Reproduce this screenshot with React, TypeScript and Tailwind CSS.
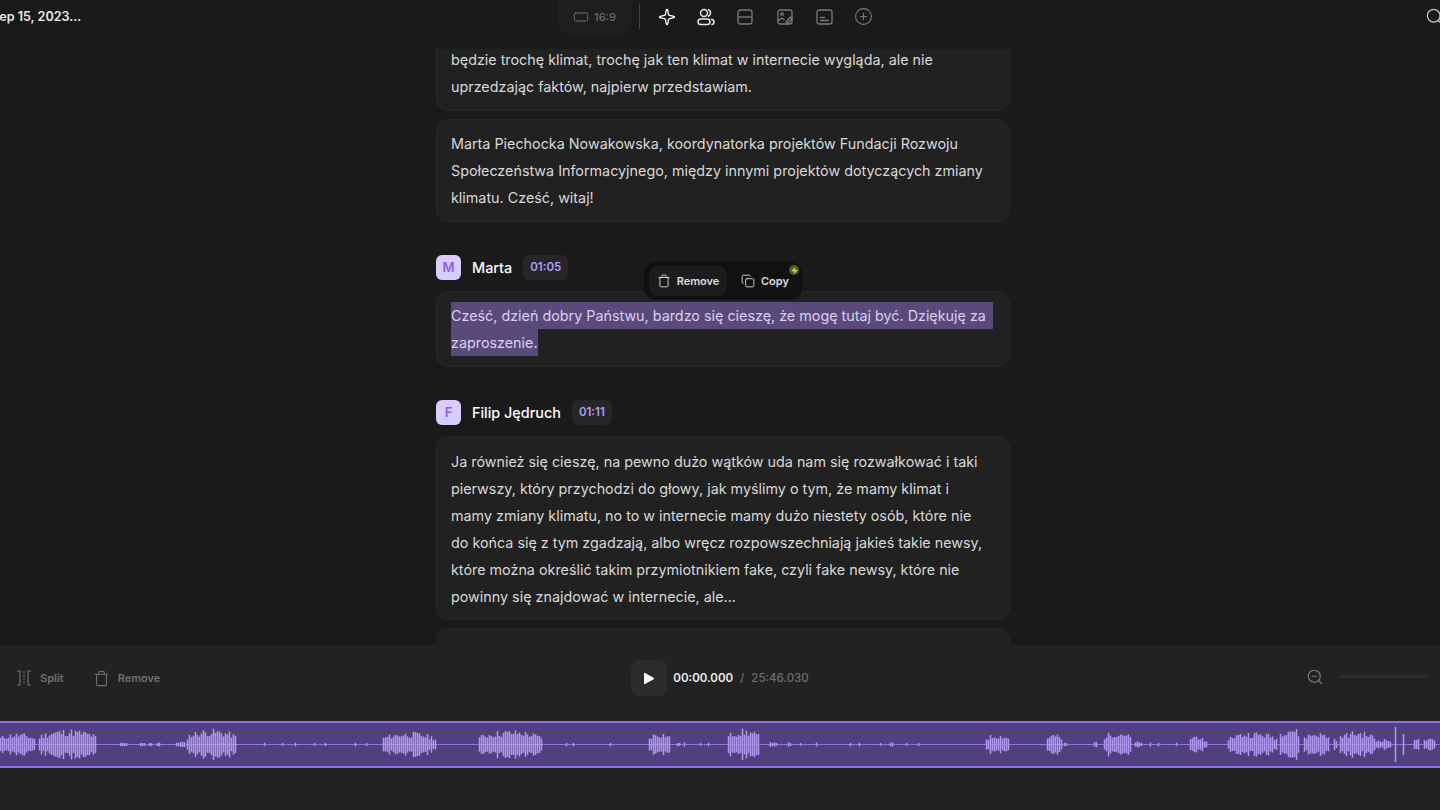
import { Copy, CirclePlus, RectangleHorizontal, Search, Sparkle, Trash, ZoomOut, Zap } from 'lucide-react';

type Cluster = [number, number, number];

// x start, x end, peak height above the centre line
const clusters: Cluster[] = [
  [0, 35, 12], [39, 97, 16], [120, 127, 2], [140, 146, 2], [149, 153, 2], [157, 160, 2],
  [176, 186, 3], [187, 237, 16], [264, 266, 2], [282, 284, 2], [295, 296, 2], [314, 316, 2],
  [325, 326, 2], [355, 357, 2], [366, 368, 2], [383, 436, 13], [479, 542, 15], [566, 568, 3],
  [573, 575, 2], [610, 612, 2], [649, 671, 13], [677, 681, 2], [684, 686, 2], [700, 702, 2],
  [708, 710, 2], [728, 760, 16], [770, 778, 3], [788, 792, 2], [800, 802, 2], [816, 818, 2],
  [850, 852, 2], [859, 861, 2], [880, 882, 2], [890, 894, 2], [906, 908, 2], [918, 920, 2],
  [986, 1010, 11], [1047, 1062, 11], [1064, 1067, 2], [1094, 1098, 3], [1104, 1132, 14],
  [1135, 1142, 3], [1150, 1152, 2], [1158, 1160, 2], [1176, 1178, 2], [1190, 1203, 10],
  [1204, 1208, 3], [1228, 1278, 13], [1280, 1300, 19], [1304, 1330, 13], [1334, 1338, 7],
  [1340, 1375, 14], [1376, 1392, 6], [1395, 1397, 18], [1403, 1405, 13], [1414, 1420, 8],
  [1424, 1436, 6],
];

function wavePath() {
  let d = '';
  let seed = 11;
  for (const [start, end, peak] of clusters) {
    const len = end - start;
    for (let x = start; x < end; x += 2) {
      seed = (seed * 9301 + 49297) % 233280;
      const t = len > 6 ? Math.sin(((x - start + 2) / (len + 2)) * Math.PI) : 1;
      const env = 0.4 + 0.6 * Math.sqrt(t);
      const h = Math.max(1.5, peak * env * (0.5 + (0.5 * seed) / 233280));
      d += `M${x + 0.5} ${23.5 - h}V${23.5 + h}`;
    }
  }
  return d;
}

const waveD = wavePath();

function SpeakerRow({ letter, name, time }: { letter: string; name: string; time: string }) {
  return (
    <div className="flex h-[25px] items-center">
      <div className="flex h-[25px] w-[25px] items-center justify-center rounded-md bg-[#d9ccff] text-[13px] font-semibold text-[#8b5cf6]">
        {letter}
      </div>
      <span className="ml-[11px] text-[14.4px] font-medium text-white">{name}</span>
      <span className="ml-[11px] flex h-[25px] items-center rounded-md bg-[#262626] px-[7px] text-[11.5px] font-semibold text-[#b49cfa]">
        {time}
      </span>
    </div>
  );
}

function Card({ children }: { children: React.ReactNode }) {
  return (
    <div className="rounded-xl border border-[#272727] bg-[#212121] px-[14px] py-[10px] text-[14.33px] leading-[27px] text-[#d8d8d8]">
      {children}
    </div>
  );
}

function ToolSlot({ children }: { children: React.ReactNode }) {
  return <div className="flex w-[39.4px] justify-center">{children}</div>;
}

function UsersIcon() {
  return (
    <svg width="18" height="18" viewBox="0 0 18 18" fill="none" stroke="currentColor" strokeWidth="1.5">
      <circle cx="7" cy="5" r="3.5" />
      <rect x="1" y="11" width="12" height="5.5" rx="2.75" />
      <path d="M11.5 1.8a3.5 3.5 0 0 1 0 6.4M14.5 11.2c1.6.4 2.5 1.5 2.5 2.8s-.9 2.3-2 2.5" strokeLinecap="round" />
    </svg>
  );
}

function SplitIcon() {
  return (
    <svg width="16" height="16" viewBox="0 0 16 16" fill="none" stroke="currentColor" strokeWidth="1.2">
      <path d="M1 1h3v14H1M15 1h-3v14h3" />
      <path d="M8 1v14" strokeDasharray="2 1.5" />
    </svg>
  );
}

function RowsIcon() {
  return (
    <svg width="16" height="16" viewBox="0 0 16 16" fill="none" stroke="currentColor" strokeWidth="1.3">
      <rect x="1" y="1" width="14" height="14" rx="2.5" />
      <path d="M1 8h14" />
    </svg>
  );
}

function ImageBrushIcon() {
  return (
    <svg width="16" height="16" viewBox="0 0 16 16" fill="none" stroke="currentColor" strokeWidth="1.3">
      <rect x="1" y="1" width="14" height="14" rx="2" />
      <circle cx="5" cy="5" r="1.2" />
      <path d="M1 12l4-3 2.5 2M9 13l4.5-5 1.5 1.5L11 14.5z" />
    </svg>
  );
}

function CaptionIcon() {
  return (
    <svg width="17" height="16" viewBox="0 0 17 16" fill="none" stroke="currentColor" strokeWidth="1.3">
      <rect x="1" y="1" width="15" height="14" rx="2" />
      <path d="M4 8.5h5M4 11.5h9" />
    </svg>
  );
}

export default function App() {
  return (
    <div className="flex h-[810px] w-[1440px] flex-col overflow-hidden bg-[#1a1a1a] font-['Inter',sans-serif]">
      <header className="relative z-10 flex h-[49px] shrink-0 items-start bg-[#1a1a1a]">
        <div className="ml-[-9px] w-[567px] pt-[9px] text-[12.6px] font-semibold leading-4 text-[#e8e8e8]">
          Sep 15, 2023...
        </div>
        <div className="flex h-[34px] w-[73px] items-center justify-center gap-[5px] rounded-b-lg bg-[#1e1e1e] text-[11px] font-medium text-[#6a6a6a]">
          <RectangleHorizontal size={16} strokeWidth={1.5} />
          16:9
        </div>
        <div className="ml-2 mt-1 h-[25px] w-px bg-[#444]" />
        <div className="ml-[7px] flex h-[33px] items-center text-[#7a7a7a]">
          <ToolSlot>
            <Sparkle size={18} strokeWidth={1.7} className="text-white" />
          </ToolSlot>
          <ToolSlot>
            <span className="text-[#e8e8e8]">
              <UsersIcon />
            </span>
          </ToolSlot>
          <ToolSlot>
            <RowsIcon />
          </ToolSlot>
          <ToolSlot>
            <ImageBrushIcon />
          </ToolSlot>
          <ToolSlot>
            <CaptionIcon />
          </ToolSlot>
          <ToolSlot>
            <CirclePlus size={19} strokeWidth={1.4} />
          </ToolSlot>
        </div>
        <Search size={19} strokeWidth={1.6} className="ml-auto mr-[-4px] mt-[7px] text-[#c8c8c8]" />
      </header>

      <main className="min-h-0 flex-1 overflow-hidden">
        <div className="ml-[436px] mt-[-14px] flex w-[574px] flex-col">
          <Card>
            będzie trochę klimat, trochę jak ten klimat w internecie wygląda, ale nie
            <br />
            uprzedzając faktów, najpierw przedstawiam.
          </Card>
          <div className="mt-2">
            <Card>
              Marta Piechocka Nowakowska, koordynatorka projektów Fundacji Rozwoju
              <br />
              Społeczeństwa Informacyjnego, między innymi projektów dotyczących zmiany
              <br />
              klimatu. Cześć, witaj!
            </Card>
          </div>

          <section className="relative mt-[33px]">
            <SpeakerRow letter="M" name="Marta" time="01:05" />
            <div className="mt-[11px]">
              <Card>
                <span className="block w-[542px] bg-[#5a4a7c] text-[#d8d0ea]">
                  Cześć, dzień dobry Państwu, bardzo się cieszę, że mogę tutaj być. Dziękuję za
                </span>
                <span className="block w-fit bg-[#5a4a7c] text-[#d8d0ea]">zaproszenie.</span>
              </Card>
            </div>
            <div className="absolute left-[208px] top-[7px] flex h-[38px] w-[158px] items-center rounded-xl bg-[#111111] px-[5px] text-[11px] font-semibold text-[#dedede]">
              <div className="flex h-[30px] w-[78px] items-center justify-center gap-[6px] rounded-lg bg-[#1c1c1c]">
                <Trash size={14} strokeWidth={1.5} />
                Remove
              </div>
              <div className="ml-[14px] flex items-center gap-[6px]">
                <Copy size={14} strokeWidth={1.5} />
                Copy
              </div>
              <div className="absolute right-[3px] top-[3px] flex h-[10px] w-[10px] items-center justify-center rounded-full bg-[#4a5a2a]">
                <Zap size={7} className="fill-[#b5e04a] text-[#b5e04a]" />
              </div>
            </div>
          </section>

          <section className="mt-[33px]">
            <SpeakerRow letter="F" name="Filip Jędruch" time="01:11" />
            <div className="mt-[11px]">
              <Card>
                <div className="-mb-px pt-px">
                  Ja również się cieszę, na pewno dużo wątków uda nam się rozwałkować i taki
                  <br />
                  pierwszy, który przychodzi do głowy, jak myślimy o tym, że mamy klimat i
                  <br />
                  mamy zmiany klimatu, no to w internecie mamy dużo niestety osób, które nie
                  <br />
                  do końca się z tym zgadzają, albo wręcz rozpowszechniają jakieś takie newsy,
                  <br />
                  które można określić takim przymiotnikiem fake, czyli fake newsy, które nie
                  <br />
                  powinny się znajdować w internecie, ale...
                </div>
              </Card>
            </div>
          </section>
          <div className="mt-2 h-[60px] rounded-xl border border-[#272727] bg-[#212121]" />
        </div>
      </main>

      <footer className="h-[165px] shrink-0 bg-[#222222] pt-[15px]">
        <div className="grid h-9 grid-cols-[1fr_auto_1fr] items-center">
          <div className="flex items-center pl-4 text-[11px] font-semibold text-[#6f6f6f]">
            <SplitIcon />
            <span className="ml-2">Split</span>
            <Trash size={17} strokeWidth={1.6} className="ml-[29px]" />
            <span className="ml-2">Remove</span>
          </div>
          <div className="flex items-center text-[11.5px] font-semibold">
            <div className="flex h-9 w-9 items-center justify-center rounded-lg bg-[#2c2c2c]">
              <svg width="12" height="13" viewBox="0 0 12 13">
                <path d="M1.5 1.2 11 6.5 1.5 11.8z" fill="#fff" stroke="#fff" strokeLinejoin="round" />
              </svg>
            </div>
            <span className="ml-[6px] mt-px text-[#eeeeee]">00:00.000</span>
            <span className="ml-[7px] mt-px font-medium text-[#6f6f6f]">/</span>
            <span className="ml-[7px] mt-px font-medium text-[#6f6f6f]">25:46.030</span>
          </div>
          <div className="flex items-center justify-end pr-3">
            <ZoomOut size={18} strokeWidth={1.5} className="mb-[2px] text-[#7a7a7a]" />
            <div className="mb-1 ml-[14px] h-[3px] w-[90px] rounded-full bg-[#2b2b2b]" />
          </div>
        </div>
        <div className="mt-[25px] h-[47px] border-y-2 border-[#8f6fee] bg-[#51407f]">
          <svg width="1440" height="43" viewBox="0 2 1440 43" className="block">
            <path d="M0 23.5H1440" stroke="#a78bea" strokeWidth="1" strokeDasharray="1.5 0.5" />
            <path d={waveD} stroke="#b197f0" strokeWidth="1.5" fill="none" />
          </svg>
        </div>
      </footer>
    </div>
  );
}
